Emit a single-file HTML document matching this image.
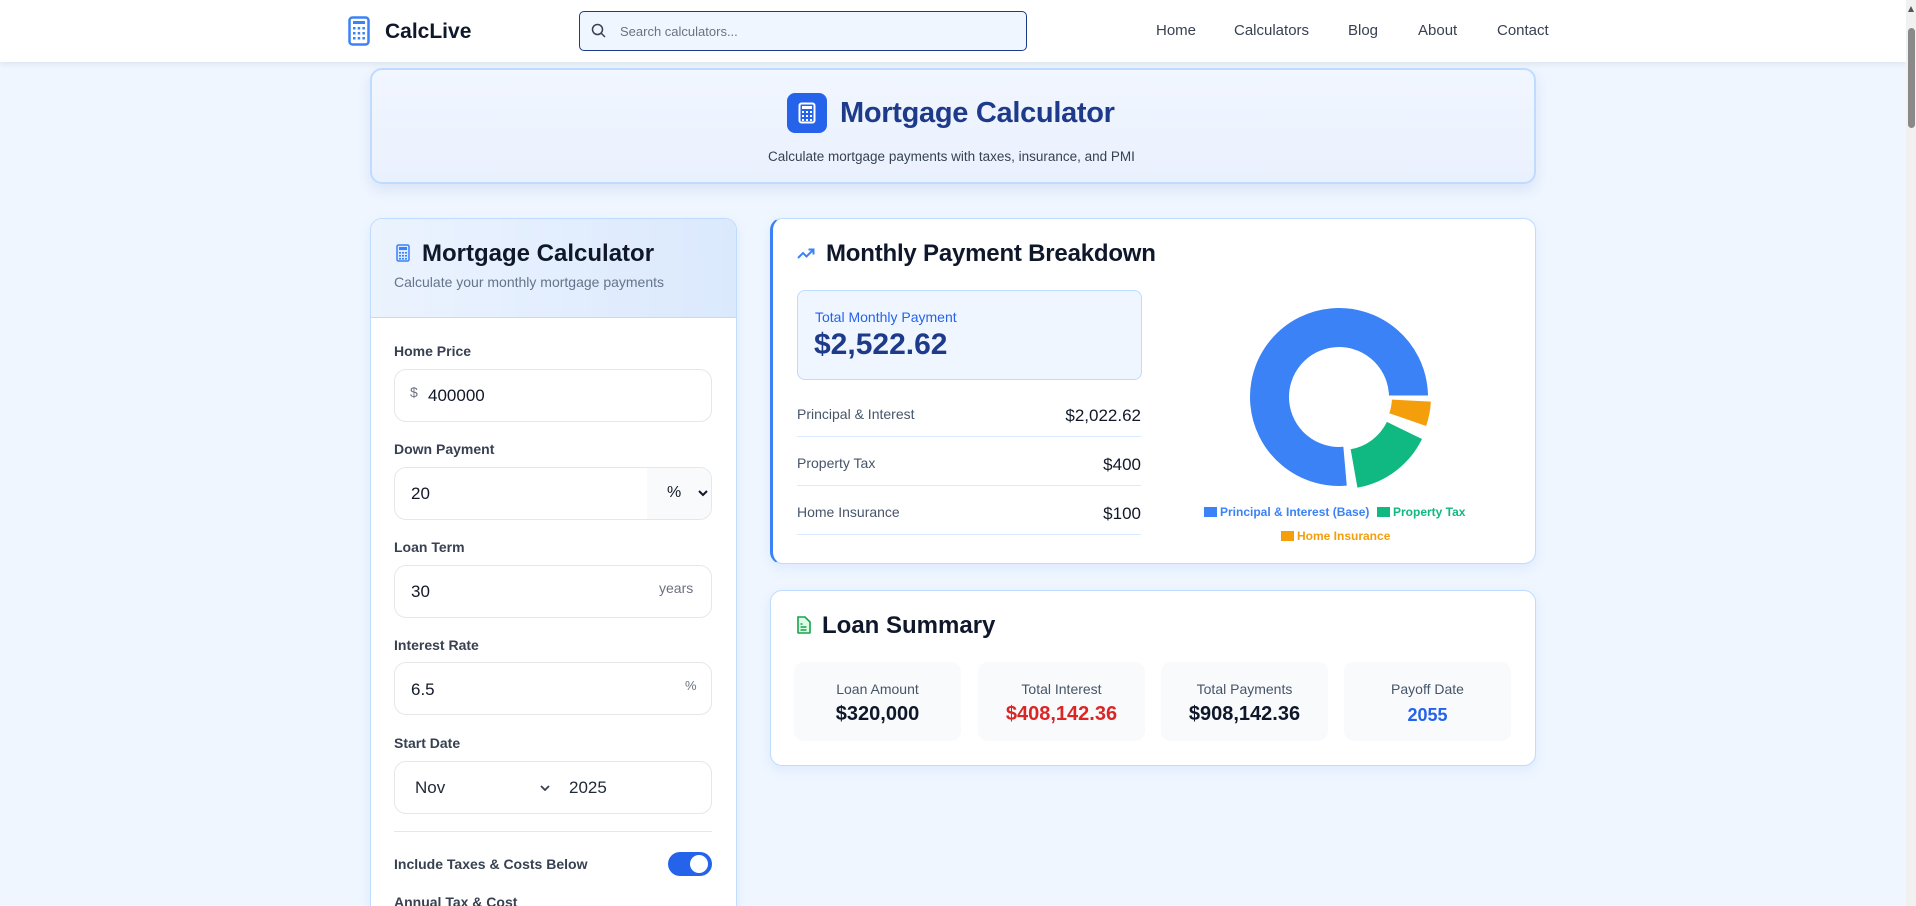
<!DOCTYPE html>
<html><head><meta charset="utf-8"><style>
*{box-sizing:border-box;margin:0;padding:0}
html,body{width:1916px;height:906px;overflow:hidden}
body{background:#eff6ff;font-family:"Liberation Sans",sans-serif;position:relative;color:#0f172a}
.a{position:absolute}
.nav{left:0;top:0;width:1906px;height:62px;background:#fff;box-shadow:0 2px 6px rgba(0,0,0,.08)}
.nl{font-size:15px;color:#374151;top:22px}
.card{background:#fff;border:1px solid #bfdbfe;border-radius:12px;box-shadow:0 4px 12px rgba(59,130,246,.1)}
.lbl{font-size:14px;font-weight:bold;color:#374151;left:394px}
.inp{left:394px;width:318px;height:53px;border:1px solid #e5e7eb;border-radius:12px;background:#fff}
.val{font-size:17px;color:#111827}
.row{left:797px;width:344px;font-size:14px;color:#475569}
.rv{right:0;top:0;font-size:17px;color:#111827;position:absolute}
.line{left:797px;width:344px;height:1px;background:#dbeafe}
.sb{top:662px;width:167px;height:79px;background:#f8fafc;border-radius:10px;text-align:center}
.sb .l{font-size:14px;color:#475569;margin-top:19px}
.sb .v{font-size:20px;font-weight:bold;margin-top:6px}
.leg{font-size:12px;font-weight:bold}
</style></head><body>
<div class="a nav"></div>
<svg class="a" style="left:348px;top:16px" width="22" height="30" viewBox="0 0 22 30"><rect x="1.5" y="1.5" width="19" height="27" rx="3" fill="none" stroke="#3b82f6" stroke-width="2.5"/><rect x="5" y="5" width="12" height="3" fill="#3b82f6"/><g fill="#3b82f6"><rect x="5" y="11" width="2.5" height="2.5"/><rect x="9.7" y="11" width="2.5" height="2.5"/><rect x="14.4" y="11" width="2.5" height="2.5"/><rect x="5" y="16" width="2.5" height="2.5"/><rect x="9.7" y="16" width="2.5" height="2.5"/><rect x="14.4" y="16" width="2.5" height="2.5"/><rect x="5" y="21" width="2.5" height="2.5"/><rect x="9.7" y="21" width="2.5" height="2.5"/><rect x="14.4" y="21" width="2.5" height="2.5"/></g></svg>
<div class="a" style="left:385px;top:20px;font-size:21px;font-weight:bold;color:#0f172a">CalcLive</div>
<div class="a" style="left:579px;top:11px;width:448px;height:40px;border:1.5px solid #1e3a8a;border-radius:5px;background:#eff6ff"></div>
<svg class="a" style="left:591px;top:23px" width="16" height="16" viewBox="0 0 16 16"><circle cx="6.5" cy="6.5" r="5" fill="none" stroke="#374151" stroke-width="1.5"/><path d="M10 10l4 4" stroke="#374151" stroke-width="1.5"/></svg>
<div class="a" style="left:620px;top:24px;font-size:13px;color:#6b7280">Search calculators...</div>
<div class="a nl" style="left:1156px">Home</div>
<div class="a nl" style="left:1234px">Calculators</div>
<div class="a nl" style="left:1348px">Blog</div>
<div class="a nl" style="left:1418px">About</div>
<div class="a nl" style="left:1497px">Contact</div>
<div class="a" style="left:1906px;top:0;width:10px;height:906px;background:#f1f1f1"></div>
<div class="a" style="left:1908px;top:28px;width:7px;height:100px;background:#8a8a8a;border-radius:4px"></div>
<div class="a" style="left:1908px;top:6px;width:0;height:0;border-left:3.5px solid transparent;border-right:3.5px solid transparent;border-bottom:6px solid #555"></div>

<div class="a" style="left:370px;top:68px;width:1166px;height:116px;background:linear-gradient(180deg,#f1f6ff,#eaf1fe);border:2px solid #bfdbfe;border-radius:12px;box-shadow:0 6px 14px rgba(30,64,175,.1)"></div>
<div class="a" style="left:787px;top:93px;width:40px;height:40px;background:#2563eb;border-radius:8px"></div>
<svg class="a" style="left:798px;top:102px" width="18" height="22" viewBox="0 0 18 22"><rect x="1.5" y="1.5" width="15" height="19" rx="2" fill="none" stroke="#fff" stroke-width="2"/><rect x="4" y="4" width="10" height="3" fill="#fff"/><g fill="#fff"><rect x="4" y="9" width="2" height="2"/><rect x="8" y="9" width="2" height="2"/><rect x="12" y="9" width="2" height="2"/><rect x="4" y="13" width="2" height="2"/><rect x="8" y="13" width="2" height="2"/><rect x="12" y="13" width="2" height="2"/><rect x="4" y="17" width="2" height="2"/><rect x="8" y="17" width="2" height="2"/><rect x="12" y="17" width="2" height="2"/></g></svg>
<div class="a" style="left:840px;top:97px;font-size:29px;font-weight:bold;color:#1e3a8a;letter-spacing:-0.3px">Mortgage Calculator</div>
<div class="a" style="left:768px;top:149px;font-size:13.5px;color:#374151">Calculate mortgage payments with taxes, insurance, and PMI</div>

<!-- left card -->
<div class="a card" style="left:370px;top:218px;width:367px;height:720px;border-radius:12px;overflow:hidden">
<div style="height:99px;background:linear-gradient(90deg,#ebf3fe,#dbe9fd);border-bottom:1px solid #bfdbfe"></div></div>
<svg class="a" style="left:396px;top:244px" width="14" height="18" viewBox="0 0 14 18"><rect x="1" y="1" width="12" height="16" rx="1.5" fill="#dbeafe" stroke="#3b82f6" stroke-width="1.5"/><rect x="3" y="3" width="8" height="3" fill="#3b82f6"/><g fill="#3b82f6"><rect x="3" y="8" width="2" height="1.6"/><rect x="6" y="8" width="2" height="1.6"/><rect x="9" y="8" width="2" height="1.6"/><rect x="3" y="11" width="2" height="1.6"/><rect x="6" y="11" width="2" height="1.6"/><rect x="9" y="11" width="2" height="1.6"/><rect x="3" y="14" width="2" height="1.6"/><rect x="6" y="14" width="2" height="1.6"/><rect x="9" y="14" width="2" height="1.6"/></g></svg>
<div class="a" style="left:422px;top:240px;font-size:24px;font-weight:bold;color:#0f172a">Mortgage Calculator</div>
<div class="a" style="left:394px;top:274px;font-size:14px;color:#64748b">Calculate your monthly mortgage payments</div>

<div class="a lbl" style="top:343px">Home Price</div>
<div class="a inp" style="top:369px"></div>
<div class="a" style="left:410px;top:384px;font-size:14px;color:#6b7280">$</div>
<div class="a val" style="left:428px;top:386px">400000</div>

<div class="a lbl" style="top:441px">Down Payment</div>
<div class="a inp" style="top:467px;overflow:hidden"><div style="position:absolute;right:0;top:0;width:64px;height:53px;background:#f8fafc"></div></div>
<div class="a val" style="left:411px;top:484px">20</div>
<div class="a" style="left:667px;top:484px;font-size:16px;color:#111827">%</div>
<svg class="a" style="left:698px;top:490px" width="10" height="7" viewBox="0 0 10 7"><path d="M1 1l4 4 4-4" fill="none" stroke="#111827" stroke-width="2"/></svg>

<div class="a lbl" style="top:539px">Loan Term</div>
<div class="a inp" style="top:565px"></div>
<div class="a val" style="left:411px;top:582px">30</div>
<div class="a" style="left:659px;top:580px;font-size:14px;color:#6b7280">years</div>

<div class="a lbl" style="top:637px">Interest Rate</div>
<div class="a inp" style="top:662px"></div>
<div class="a val" style="left:411px;top:680px">6.5</div>
<div class="a" style="left:685px;top:678px;font-size:13px;color:#6b7280">%</div>

<div class="a lbl" style="top:735px">Start Date</div>
<div class="a inp" style="top:761px"></div>
<div class="a val" style="left:415px;top:778px;color:#1f2937">Nov</div>
<svg class="a" style="left:540px;top:785px" width="10" height="6" viewBox="0 0 10 6"><path d="M1 1l4 4 4-4" fill="none" stroke="#374151" stroke-width="1.8"/></svg>
<div class="a val" style="left:569px;top:778px;color:#1f2937">2025</div>

<div class="a" style="left:394px;top:831px;width:318px;height:1px;background:#e5e7eb"></div>
<div class="a lbl" style="top:856px">Include Taxes &amp; Costs Below</div>
<div class="a" style="left:668px;top:852px;width:44px;height:24px;background:#2563eb;border-radius:12px"></div>
<div class="a" style="left:690px;top:855px;width:18px;height:18px;background:#fff;border-radius:50%"></div>
<div class="a lbl" style="top:894px">Annual Tax &amp; Cost</div>

<!-- breakdown card -->
<div class="a card" style="left:770px;top:218px;width:766px;height:346px;border-left:3px solid #3b82f6"></div>
<svg class="a" style="left:797px;top:247px" width="18" height="12" viewBox="0 0 18 12"><path d="M1 11l5-5 3.5 3.5L16 3" fill="none" stroke="#3b82f6" stroke-width="2"/><path d="M11.5 2.5H16.5V7.5" fill="none" stroke="#3b82f6" stroke-width="2"/></svg>
<div class="a" style="left:826px;top:240px;font-size:24px;font-weight:bold;color:#0f172a;letter-spacing:-0.2px">Monthly Payment Breakdown</div>
<div class="a" style="left:797px;top:290px;width:345px;height:90px;background:#eff6ff;border:1.5px solid #bfdbfe;border-radius:8px"></div>
<div class="a" style="left:815px;top:309px;font-size:14px;color:#2563eb">Total Monthly Payment</div>
<div class="a" style="left:814px;top:328px;font-size:30px;font-weight:bold;color:#1e3a8a">$2,522.62</div>
<div class="a row" style="top:406px">Principal &amp; Interest<span class="rv">$2,022.62</span></div>
<div class="a line" style="top:436px"></div>
<div class="a row" style="top:455px">Property Tax<span class="rv">$400</span></div>
<div class="a line" style="top:485px"></div>
<div class="a row" style="top:504px">Home Insurance<span class="rv">$100</span></div>
<div class="a line" style="top:534px"></div>

<svg class="a" style="left:1239px;top:297px" width="200" height="200" viewBox="-100 -100 200 200">
<g fill="none" stroke-width="39">
<circle r="69.5" stroke="#3b82f6" stroke-dasharray="333.6 1000" transform="rotate(85)"/>
<circle r="69.5" stroke="#f59e0b" stroke-dasharray="19.4 1000" transform="translate(3,0) rotate(3)"/>
<circle r="69.5" stroke="#10b981" stroke-dasharray="65.5 1000" transform="translate(3,3) rotate(26)"/>
</g>
<g stroke="#fff" stroke-width="3"><line x1="0" y1="0" x2="100" y2="0"/></g>
</svg>
<div class="a" style="left:1204px;top:507px;width:13px;height:10px;background:#3b82f6"></div>
<div class="a leg" style="left:1220px;top:505px;color:#3b82f6">Principal &amp; Interest (Base)</div>
<div class="a" style="left:1377px;top:507px;width:13px;height:10px;background:#10b981"></div>
<div class="a leg" style="left:1393px;top:505px;color:#10b981">Property Tax</div>
<div class="a" style="left:1281px;top:531px;width:13px;height:10px;background:#f59e0b"></div>
<div class="a leg" style="left:1297px;top:529px;color:#f59e0b">Home Insurance</div>

<!-- loan summary -->
<div class="a card" style="left:770px;top:590px;width:766px;height:176px"></div>
<svg class="a" style="left:796px;top:616px" width="15" height="18" viewBox="0 0 15 18"><path d="M2 1h7l5 5v10.5a.5.5 0 0 1-.5.5h-11a.5.5 0 0 1-.5-.5z" fill="#dcfce7" stroke="#16a34a" stroke-width="1.6"/><path d="M4.5 8h2M4.5 11h6M4.5 14h6" stroke="#16a34a" stroke-width="1.5"/></svg>
<div class="a" style="left:822px;top:612px;font-size:24px;font-weight:bold;color:#0f172a">Loan Summary</div>
<div class="a sb" style="left:794px"><div class="l">Loan Amount</div><div class="v">$320,000</div></div>
<div class="a sb" style="left:978px"><div class="l">Total Interest</div><div class="v" style="color:#dc2626">$408,142.36</div></div>
<div class="a sb" style="left:1161px"><div class="l">Total Payments</div><div class="v">$908,142.36</div></div>
<div class="a sb" style="left:1344px"><div class="l">Payoff Date</div><div class="v" style="color:#2563eb;font-size:18px;margin-top:8px">2055</div></div>
</body></html>
